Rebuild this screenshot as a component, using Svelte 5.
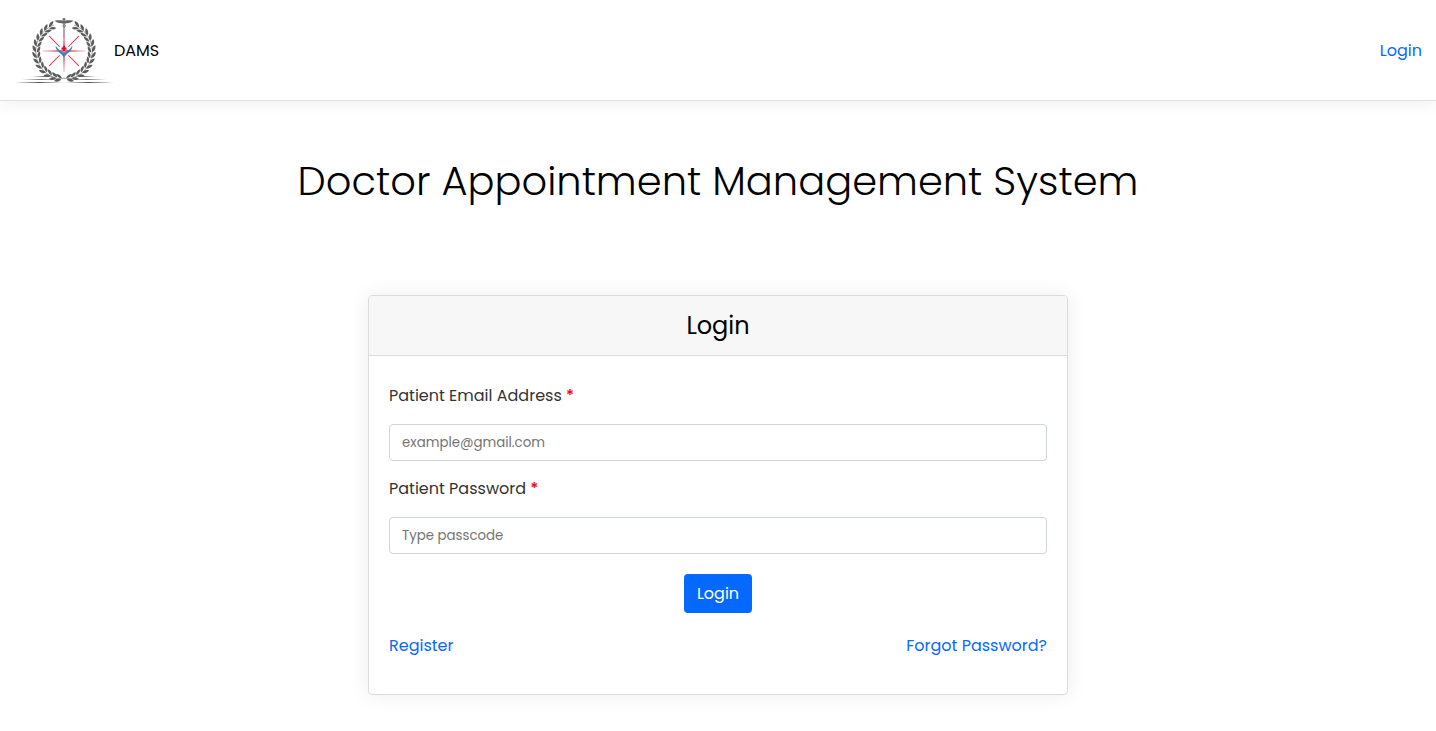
<script>
  const leafAngles = [27, 39, 51, 63, 75, 87, 99, 111, 123, 135, 147, 159, 169];
  const axes = [0, 90, 180, 270];
  const diagonals = [45, 135, 225, 315];
  let email = $state('');
  let password = $state('');
</script>

<nav class="navbar">
  <a class="brand" href="#home">
    <svg class="logo" viewBox="0 0 100 72" aria-hidden="true">
      <defs>
        <linearGradient id="fade" x1="0" x2="1" y1="0" y2="0">
          <stop offset="0" stop-color="#555" stop-opacity="0" />
          <stop offset="0.5" stop-color="#555" />
          <stop offset="1" stop-color="#555" stop-opacity="0" />
        </linearGradient>
        <linearGradient id="ray" x1="0" x2="0" y1="0" y2="1">
          <stop offset="0" stop-color="#f04a68" stop-opacity="0.35" />
          <stop offset="1" stop-color="#f0304c" stop-opacity="0.8" />
        </linearGradient>
        <g id="branch">
          <path d="M60 10A28 28 0 0 1 54 64" fill="none" stroke="#888" stroke-width="0.7" />
          {#each leafAngles as angle}
            <g transform="rotate({angle} 50 36)">
              <path d="M52.500 8C50.500 8.500 47.200 7.500 46 4.500C49.500 4 52 5.500 52.500 8Z" />
              <path d="M53 9C50.500 8.500 47.500 9.500 46.500 12C49.500 12.700 52 11.500 53 9Z" />
            </g>
          {/each}
        </g>
      </defs>
      <g fill="#5c5c5c">
        <use href="#branch" />
        <use href="#branch" transform="translate(100 0) scale(-1 1)" />
      </g>
      {#each axes as angle}
        <path d="M49.400 15H50.600L51.200 35H48.800Z" fill="url(#ray)" transform="rotate({angle} 50 36)" />
      {/each}
      {#each diagonals as angle}
        <path d="M49.600 15H50.400L50.500 30H49.500Z" fill="#ef2446" transform="rotate({angle} 50 36)" />
      {/each}
      <path d="M42 31.500C42.500 36 46 37 50 41.500C54 37 57.500 36 58 31.500C56.500 35 53.500 35.500 50 39C46.500 35.500 43.500 35 42 31.500Z" fill="#2685c4" stroke="#2685c4" stroke-width="0.7" />
      <path d="M49 31H51V32.500H52.500V34.500H51V36.500H49V34.500H47.500V32.500H49Z" fill="#f00022" />
      <g fill="#666">
        <path d="M40.500 5.500C44 5 47 5 48.500 5.500H51.500C53 5 56 5 59.500 5.500C58 7.500 54 8.500 51 8H49C46 8.500 42 7.500 40.500 5.500Z" />
        <circle cx="50" cy="4.300" r="1.300" />
        <path d="M49.300 7H50.700L50.300 23H49.700Z" />
      </g>
      <path d="M48 8Q54 10 50 12.500Q47 10.500 52 8" fill="none" stroke="#777" stroke-width="0.8" />
      <g fill="url(#fade)">
        <rect x="18" y="61" width="24" height="0.800" />
        <rect x="58" y="61" width="24" height="0.800" />
        <rect x="8" y="64" width="38" height="0.800" />
        <rect x="54" y="64" width="38" height="0.800" />
        <rect x="0" y="67" width="50" height="1" />
        <rect x="50" y="67" width="50" height="1" />
      </g>
      <path d="M46 64Q50 62.500 54 64" fill="none" stroke="#888" stroke-width="0.8" />
    </svg>
    <span>DAMS</span>
  </a>
  <a class="link" href="#login">Login</a>
</nav>

<main>
  <h1>Doctor Appointment Management System</h1>

  <section class="card">
    <h2>Login</h2>
    <form onsubmit={(event) => event.preventDefault()}>
      <label for="email">Patient Email Address <span class="required">*</span></label>
      <input id="email" type="email" placeholder="example@gmail.com" bind:value={email} required />
      <label for="password">Patient Password <span class="required">*</span></label>
      <input id="password" type="password" placeholder="Type passcode" bind:value={password} required />
      <button type="submit">Login</button>
      <div class="links">
        <a class="link" href="#register">Register</a>
        <a class="link" href="#forgot">Forgot Password?</a>
      </div>
    </form>
  </section>
</main>

<style>
  :global(body) {
    margin: 0;
    background: #fff;
    color: #000;
    font-family: Poppins, Inter, sans-serif;
    font-size: 16px;
    line-height: 24px;
  }
  .navbar {
    display: flex;
    align-items: center;
    justify-content: space-between;
    padding: 15px 14px 13px;
    border-bottom: 1px solid #e0e0e0;
    box-shadow: 0 2px 16px rgba(0, 0, 0, 0.07);
  }
  .brand {
    display: flex;
    align-items: center;
    color: #000;
    text-decoration: none;
  }
  .logo {
    width: 100px;
    height: 72px;
  }
  .link {
    color: #0669ff;
    text-decoration: none;
  }
  main {
    padding: 48px 16px 36px;
  }
  h1 {
    margin: 0 0 82px;
    font-size: 40px;
    line-height: 64px;
    font-weight: 300;
    text-align: center;
  }
  .card {
    box-sizing: border-box;
    max-width: 700px;
    margin: 0 auto;
    border: 1px solid #dcdcdc;
    border-radius: 4px;
    box-shadow: 0 0 20px rgba(0, 0, 0, 0.08);
    overflow: hidden;
  }
  h2 {
    margin: 0;
    padding: 12px 20px 11px;
    border-bottom: 1px solid #dcdcdc;
    background: #f7f7f7;
    font-size: 24px;
    line-height: 36px;
    font-weight: 400;
    text-align: center;
  }
  form {
    display: flex;
    flex-direction: column;
    padding: 28px 20px 36px;
  }
  label {
    margin-bottom: 16px;
    color: #333;
  }
  .required {
    color: #f00;
    font-weight: 500;
  }
  input {
    box-sizing: border-box;
    width: 100%;
    height: 37px;
    margin: 0 0 16px;
    padding: 0 12px;
    border: 1px solid #ced4da;
    border-radius: 4px;
    background: #fff;
    font-family: inherit;
  }
  input::placeholder {
    color: #757575;
    opacity: 1;
  }
  button {
    align-self: center;
    margin: 4px 0 21px;
    padding: 8px 13px 7px;
    border: 0;
    border-radius: 4px;
    background: #0669ff;
    color: #fff;
    font: inherit;
    cursor: pointer;
  }
  .links {
    display: flex;
    justify-content: space-between;
  }
</style>
